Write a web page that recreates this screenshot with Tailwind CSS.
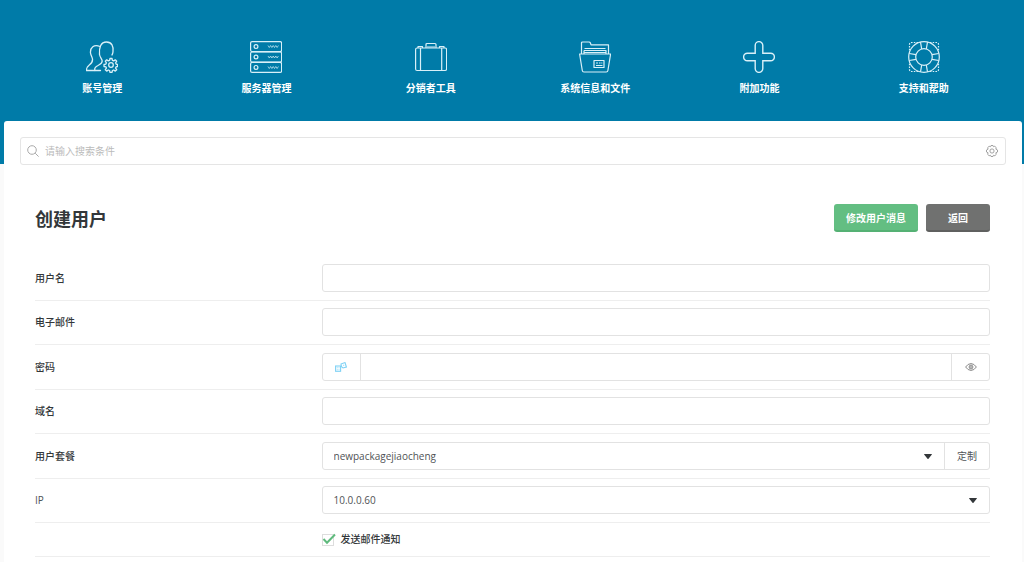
<!DOCTYPE html>
<html lang="zh-CN">
<head>
<meta charset="utf-8">
<meta name="viewport" content="width=device-width, initial-scale=1">
<title>创建用户</title>
<script src="https://cdn.jsdelivr.net/npm/@tailwindcss/browser@4"></script>
</head>
<body class="min-h-screen flex flex-col bg-[#fafafa] text-[#33373a] text-[10px] leading-4 font-['Open_Sans','Noto_Sans_CJK_SC',sans-serif]">
<header class="bg-[#007ba8] h-[164px] pl-5 pr-[18px] pt-[41px] shrink-0">
  <nav class="grid grid-cols-6 text-white font-bold text-center">
    <a href="#accounts" class="flex flex-col items-center gap-[7px]">
      <svg class="size-8" viewBox="0 0 32 32" fill="none" stroke="#d9f0f8" stroke-width="1.3" stroke-linecap="round" stroke-linejoin="round">
        <path d="M9 29.5c-1-2 .5-3.700 3-5 2.500-1.400 4.200-2 4.200-4.500 0-1.800-2.200-3.500-2.700-6.500C13 7 14.500 1 20.500 1c5.500 0 7 4.500 6.500 9.500 0 1.500-.5 2.300-1 3.500"/>
        <path d="M14 5.500C8 3 4 6.500 4.500 12c.2 2.200 1.700 4 2 6 .3 3-.8 4.300-3.200 6C.8 25.800.4 27 .5 29.500h14"/>
        <circle cx="25" cy="24" r="2.300"/>
        <path d="M24 17.500h2l.4 1.900 1.300.5 1.600-1.100 1.400 1.400-1.100 1.600.5 1.300 1.500.4v2l-1.500.3-.5 1.300 1.100 1.600-1.400 1.400-1.600-1.100-1.300.5-.4 1.900h-2l-.4-1.900-1.300-.5-1.600 1.100-1.400-1.400 1.100-1.600-.5-1.300-1.900-.3v-2l1.900-.4.5-1.300-1.100-1.600 1.400-1.400 1.600 1.100 1.300-.5z"/>
      </svg>
      <span>账号管理</span>
    </a>
    <a href="#server" class="flex flex-col items-center gap-[7px]">
      <svg class="size-8" viewBox="0 0 32 32" fill="none" stroke="#d9f0f8" stroke-width="1.200">
        <rect x=".6" y=".6" width="31" height="10" rx="1.500"/><rect x=".6" y="11" width="31" height="10" rx="1.500"/><rect x=".6" y="21.400" width="31" height="10" rx="1.500"/>
        <circle cx="6" cy="5.600" r="1.900"/><circle cx="6" cy="16" r="1.900"/><circle cx="6" cy="26.400" r="1.900"/>
        <path stroke-width=".7" d="M18 4.500l1.300 2 1.300-2 1.300 2 1.300-2 1.300 2 1.300-2 1.300 2 1.300-2M18 15l1.300 2 1.300-2 1.300 2 1.300-2 1.300 2 1.300-2 1.300 2 1.300-2M18 25.500l1.300 2 1.300-2 1.300 2 1.300-2 1.300 2 1.300-2 1.300 2 1.300-2"/>
      </svg>
      <span>服务器管理</span>
    </a>
    <a href="#reseller" class="flex flex-col items-center gap-[7px]">
      <svg class="size-8" viewBox="0 0 32 32" fill="none" stroke="#d9f0f8" stroke-width="1.200" stroke-linejoin="round">
        <rect x=".6" y="7" width="31" height="22.500" rx="1.500"/>
        <path d="M5.500 7v22.500M26.700 7v22.500M3 7V5.500h4.500V7M24.500 7V5.500H29V7M11 7V3.500q0-1 1-1h8q1 0 1 1V7M12 6h8"/>
      </svg>
      <span>分销者工具</span>
    </a>
    <a href="#files" class="flex flex-col items-center gap-[7px]">
      <svg class="size-8" viewBox="0 0 32 32" fill="none" stroke="#d9f0f8" stroke-width="1.200" stroke-linejoin="round">
        <path d="M.6 13h31l-2.700 16.500q-.2 1.500-1.700 1.500H5q-1.500 0-1.700-1.500zM2.500 13V2q0-1 1-1h6.500q1 0 1.300.8l.7 2h17.500v9.200"/>
        <path d="M4.500 11.500h23M5 9.500h22V13M5.500 7.500h21M5 13V9.500"/>
        <rect x="15" y="19.500" width="10" height="7"/><path d="M17 22h2m1 0h1.500m.8 0h1M17 24.500h6.500"/>
      </svg>
      <span>系统信息和文件</span>
    </a>
    <a href="#extra" class="flex flex-col items-center gap-[7px]">
      <svg class="size-8" viewBox="0 0 32 32" fill="none" stroke="#d9f0f8" stroke-width="1.400">
        <path d="M12.200 12.200V4.400a3.800 3.800 0 0 1 7.600 0v7.800h7.800a3.800 3.800 0 0 1 0 7.600h-7.800v7.800a3.800 3.800 0 0 1-7.600 0v-7.800H4.400a3.800 3.800 0 0 1 0-7.600z"/>
      </svg>
      <span>附加功能</span>
    </a>
    <a href="#support" class="flex flex-col items-center gap-[7px]">
      <svg class="size-8" viewBox="0 0 32 32" fill="none" stroke="#d9f0f8" stroke-width="1.200">
        <circle cx="16" cy="16" r="15.300"/><circle cx="16" cy="16" r="8.300"/>
        <path d="M12.500 1.200l1.200 6.800M19.500 1.200L18.300 8M12.500 30.800l1.200-6.800M19.500 30.800L18.300 24M1.200 12.500L8 13.700M1.200 19.500L8 18.300M30.800 12.500L24 13.700M30.800 19.500L24 18.300"/>
        <path stroke-dasharray="1.500 1.200" d="M10 1.500H3.500q-2 0-2 2V10M22 1.500h6.500q2 0 2 2V10M10 30.500H3.500q-2 0-2-2V22M22 30.500h6.500q2 0 2-2V22"/>
      </svg>
      <span>支持和帮助</span>
    </a>
  </nav>
</header>

<main class="grow ml-1 mr-0.5 -mt-[43px] bg-white rounded-t-[3px] px-4 pt-4">
  <form role="search" class="flex items-center h-7 border border-[#e5e5e5] rounded-[3px] pl-1.5 pr-[7px] gap-1.5">
    <svg class="size-3 shrink-0" viewBox="0 0 12 12" fill="none" stroke="#aaa" stroke-width="1"><circle cx="5" cy="5" r="4.300"/><path d="M8.200 8.200l3.400 3.400"/></svg>
    <input type="search" aria-label="搜索" placeholder="请输入搜索条件" class="grow min-w-0 outline-none placeholder:text-[#bbb]">
    <button type="button" aria-label="搜索设置">
      <svg class="size-3" viewBox="0 0 12 12" fill="none" stroke="#999" stroke-width=".9" stroke-linejoin="round"><path d="M5 .5h2l.4 1.200 1.400-.4 1.500 1.400-.5 1.400 1.700.9v2l-1.700.8.5 1.500-1.400 1.400-1.500-.4L7 11.500H5l-.5-1.200-1.400.4-1.500-1.400.5-1.500L.5 7V5l1.600-.9-.5-1.400 1.500-1.400 1.500.4z"/><circle cx="6" cy="6" r="2.100"/></svg>
    </button>
  </form>

  <form class="ml-[15px] mr-4">
    <div class="flex items-center justify-between pt-[39px] pb-6">
      <h1 class="pt-0.5 text-[18px] leading-6 font-bold">创建用户</h1>
      <div class="flex gap-2 text-white font-bold">
        <button type="submit" class="h-7 px-3 pt-0.5 min-w-[84px] rounded-[3px] bg-[#63be82] border-b-2 border-[#55b174]">修改用户消息</button>
        <button type="button" class="h-7 w-16 pt-0.5 rounded-[3px] bg-[#707170] border-b-2 border-[#5f605f]">返回</button>
      </div>
    </div>

    <div class="flex items-center h-[45px] border-b border-[#eee]">
      <label for="user" class="w-[30%] font-medium">用户名</label>
      <input id="user" type="text" class="grow min-w-0 h-7 px-3 border border-[#e2e2e2] rounded-[3px]">
    </div>
    <div class="flex items-center h-11 pb-px border-b border-[#eee]">
      <label for="email" class="w-[30%] font-medium">电子邮件</label>
      <input id="email" type="email" class="grow min-w-0 h-7 px-3 border border-[#e2e2e2] rounded-[3px]">
    </div>
    <div class="flex items-center h-[45px] border-b border-[#eee]">
      <label for="pass" class="w-[30%] font-medium">密码</label>
      <div class="grow flex h-7 border border-[#e2e2e2] rounded-[3px]">
        <button type="button" aria-label="生成密码" class="w-[38px] flex items-center justify-center border-r border-[#e2e2e2]">
          <svg class="w-3 h-[10px]" viewBox="0 0 12 10" fill="none" stroke="#7fd2f5" stroke-width="1.100"><rect x=".6" y="4" width="5" height="5.300"/><path d="M6 2l4-1.400L11.400 5 8 6 6.500 4.800z"/><path d="M1.800 5.800h.8m1 0h.8M1.800 7.700h.8m1 0h.8M8.200 3.200h1"/></svg>
        </button>
        <input id="pass" type="password" class="grow min-w-0 px-3">
        <button type="button" aria-label="显示密码" class="w-[38px] flex items-center justify-center border-l border-[#e2e2e2]">
          <svg class="w-3 h-2" viewBox="0 0 12 8" fill="none" stroke="#777" stroke-width=".9"><path d="M.6 4Q3 .6 6 .6T11.400 4Q9 7.400 6 7.400T.6 4z"/><circle cx="6" cy="4" r="1.900"/><circle cx="6" cy="4" r=".5"/></svg>
        </button>
      </div>
    </div>
    <div class="flex items-center h-11 pb-px border-b border-[#eee]">
      <label for="domain" class="w-[30%] font-medium">域名</label>
      <input id="domain" type="text" class="grow min-w-0 h-7 px-3 border border-[#e2e2e2] rounded-[3px]">
    </div>
    <div class="flex items-center h-[45px] border-b border-[#eee]">
      <label for="package" class="w-[30%] font-medium">用户套餐</label>
      <div class="grow flex h-7 border border-[#e2e2e2] rounded-[3px] text-[#505356]">
        <div class="grow grid items-center">
          <select id="package" class="col-start-1 row-start-1 appearance-none h-full w-full pl-[11px] pr-8"><option>newpackagejiaocheng</option></select>
          <svg class="col-start-1 row-start-1 justify-self-end mr-3 w-2 h-[5px] pointer-events-none" viewBox="0 0 8 5" fill="#33373a"><path d="M.5 0h7q.8.100.2.800L4.500 4.700q-.5.500-1 0L.3.800Q-.3.100.5 0z"/></svg>
        </div>
        <button type="button" class="w-[45px] border-l border-[#e2e2e2]">定制</button>
      </div>
    </div>
    <div class="flex items-center h-11 pb-px border-b border-[#eee]">
      <label for="ip" class="w-[30%] text-[#505356]">IP</label>
      <div class="grow grid items-center h-7 border border-[#e2e2e2] rounded-[3px] text-[#505356]">
        <select id="ip" class="col-start-1 row-start-1 appearance-none h-full w-full pl-[11px] pr-8"><option>10.0.0.60</option></select>
        <svg class="col-start-1 row-start-1 justify-self-end mr-3 w-2 h-[5px] pointer-events-none" viewBox="0 0 8 5" fill="#33373a"><path d="M.5 0h7q.8.100.2.800L4.500 4.700q-.5.500-1 0L.3.800Q-.3.100.5 0z"/></svg>
      </div>
    </div>
    <div class="flex items-center h-[34px] pb-px border-b border-[#eee] pl-[30%]">
      <label class="flex items-center gap-[7px] font-medium">
        <span class="grid items-center size-3">
          <input type="checkbox" checked class="peer col-start-1 row-start-1 appearance-none size-3 border border-[#ddd] bg-white">
          <svg class="col-start-1 row-start-1 size-[14px] hidden peer-checked:block pointer-events-none" viewBox="0 0 14 14" fill="none" stroke="#5fba7d" stroke-width="2"><path d="M1.500 6L5 9.700 13 1.500"/></svg>
        </span>
        发送邮件通知
      </label>
    </div>
  </form>
</main>
</body>
</html>
